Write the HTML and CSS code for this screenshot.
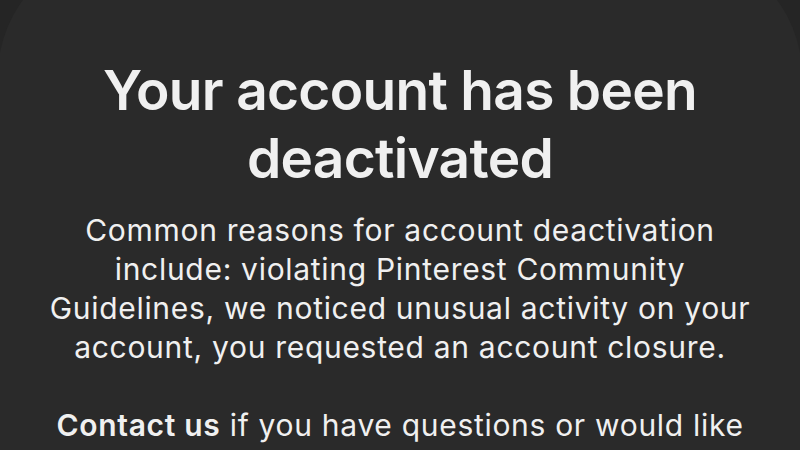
FILE: index.html
```html
<!DOCTYPE html>
<html lang="en">
<head>
<meta charset="utf-8">
<title>Account deactivated</title>
<link rel="stylesheet" href="styles.css">
</head>
<body>
<div class="sheet">
  <h1 class="title">Your account has been<br>deactivated</h1>
  <p class="text">Common reasons for account deactivation<br>include: violating Pinterest Community<br>Guidelines, we noticed unusual activity on your<br>account, you requested an account closure.</p>
  <p class="text"><strong>Contact us</strong> if you have questions or would like</p>
</div>
</body>
</html>
```
FILE: styles.css
```css
html, body {
  margin: 0;
  padding: 0;
  background: #252525;
  height: 100%;
  overflow: hidden;
}
.sheet {
  margin: -50px -2px 0;
  height: calc(100% + 50px);
  overflow: hidden;
  background: #2a2a2a;
  border-radius: 125px 125px 0 0;
  padding: 106px 0 0;
  box-sizing: border-box;
  text-align: center;
  color: #f0f0f0;
  font-family: Inter, "Noto Sans", sans-serif;
}
.title {
  margin: 0;
  font-size: 55px;
  font-weight: 600;
  line-height: 68px;
  letter-spacing: -0.7px;
}
.text {
  margin: 19px 0 39px;
  font-size: 30px;
  font-weight: 400;
  line-height: 39px;
  letter-spacing: 0.7px;
  white-space: nowrap;
}
.text + .text {
  margin-top: 0;
}
.text strong {
  font-weight: 600;
}
```
